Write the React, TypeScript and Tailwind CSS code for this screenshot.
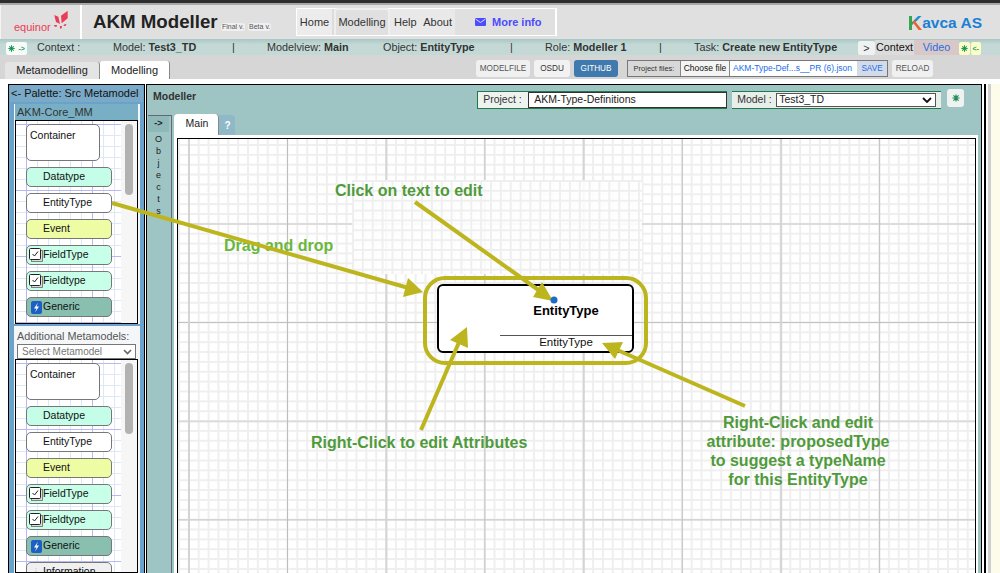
import React from "react";

const gridCls =
  "bg-white bg-[linear-gradient(90deg,#b8b8f4_1.5px,transparent_1.5px),linear-gradient(180deg,#b8b8f4_1.5px,transparent_1.5px),linear-gradient(90deg,#dce8f8_1px,transparent_1px),linear-gradient(180deg,#dce8f8_1px,transparent_1px)] bg-[size:66px_66px,66px_66px,11px_11px,11px_11px] bg-[position:10px_3px,10px_3px,10px_3px,10px_3px]";

const canvasGrid =
  "bg-[linear-gradient(90deg,#bdbdbd_1px,transparent_1px),linear-gradient(90deg,#d4d4d4_2px,transparent_2px),linear-gradient(180deg,#c2c2c2_1px,transparent_1px),linear-gradient(180deg,#dcdcdc_2px,transparent_2px),linear-gradient(90deg,#efefef_1.5px,transparent_1.5px),linear-gradient(180deg,#efefef_1.5px,transparent_1.5px)] bg-[size:197.4px_197.4px,197.4px_197.4px,197.4px_197.4px,197.4px_197.4px,9.87px_9.87px,9.87px_9.87px] bg-[position:109px_0px,10px_0px,0px_183px,0px_84px,0px_5px,0px_5px]";

function CheckIcon() {
  return (
    <svg width="14" height="14" viewBox="0 0 14 14" className="shrink-0">
      <rect x="2.5" y="2.5" width="11" height="11" fill="#ddd" stroke="#666" strokeWidth="0.8" />
      <rect x="0.5" y="0.5" width="11" height="11" rx="1" fill="#fff" stroke="#222" strokeWidth="1" />
      <path d="M3.5 6 L5.5 8 L9 3.5" fill="none" stroke="#222" strokeWidth="1" />
    </svg>
  );
}

function BoltIcon() {
  return (
    <svg width="11" height="13" viewBox="0 0 11 13" className="shrink-0">
      <rect width="11" height="13" rx="2" fill="#1e5fc4" />
      <path d="M7 1.5 L3 7.5 H5.5 L4 11.5 L8 5.5 H5.5 Z" fill="#fff" />
    </svg>
  );
}

function Item({
  label,
  bg,
  icon,
}: {
  label: string;
  bg: string;
  icon?: React.ReactNode;
}) {
  return (
    <div
      className={
        "w-[86px] h-[20px] shrink-0 rounded-[5px] border-[1.5px] border-[#777] flex items-center text-[10.5px] text-[#111] " +
        bg
      }
    >
      <span className="w-[16px] shrink-0 flex justify-center pl-[2px]">{icon}</span>
      <span className="whitespace-nowrap">{label}</span>
    </div>
  );
}

function PaletteList({ info }: { info?: boolean }) {
  return (
    <div className="relative flex-1 min-h-0 overflow-hidden border border-black flex">
      <div className={"flex-1 min-w-0 pl-[10px] pt-[3px] flex flex-col gap-[6px] overflow-hidden " + gridCls}>
        <div className="w-[74px] h-[37px] shrink-0 rounded-[5px] border-[1.5px] border-[#777] bg-white text-[10.5px] text-[#111] pl-[3px] pt-[3px]">
          Container
        </div>
        <Item label="Datatype" bg="bg-[#c4fde8]" />
        <Item label="EntityType" bg="bg-white" />
        <Item label="Event" bg="bg-[#eefca4]" />
        <Item label="FieldType" bg="bg-[#c8ffe9]" icon={<CheckIcon />} />
        <Item label="Fieldtype" bg="bg-[#c8ffe9]" icon={<CheckIcon />} />
        <Item label="Generic" bg="bg-[#88bfae]" icon={<BoltIcon />} />
        <Item
          label={info ? "Information" : ""}
          bg="bg-[#f0f0f0]"
          icon={info ? <span className="text-[#ccc] text-[11px] leading-none">i</span> : undefined}
        />
      </div>
      <div className="w-[16px] shrink-0 bg-[#f6f6f6] pt-[3px] flex justify-center">
        <div className="w-[8px] h-[71px] rounded-full bg-[#b2b2b2]" />
      </div>
    </div>
  );
}

function TinyAsterisk({ color = "#1c9a58", size = 7 }: { color?: string; size?: number }) {
  return (
    <svg width={size} height={size} viewBox="0 0 10 10" className="shrink-0">
      <path d="M5 0.5 V9.5 M0.5 5 H9.5 M1.8 1.8 L8.2 8.2 M8.2 1.8 L1.8 8.2" stroke={color} strokeWidth="1.5" />
    </svg>
  );
}

function TinyBtn({ bg, children }: { bg: string; children: React.ReactNode }) {
  return (
    <span className={"w-[10.5px] h-[13px] flex items-center justify-center rounded-[2px] text-[7px] leading-none text-[#1c9a58] font-bold " + bg}>
      {children}
    </span>
  );
}

export default function App() {
  return (
    <div className="relative w-[1000px] h-[573px] overflow-hidden flex flex-col bg-white font-['Liberation_Sans',Arial,sans-serif] text-[#222]">
      {/* window edge */}
      <div className="h-[3px] shrink-0 bg-[#2e2e2e]" />
      <div className="h-[2px] shrink-0 bg-[#a8a8a8]" />

      {/* header */}
      <div className="h-[34px] shrink-0 bg-[#e0e0e0] flex items-stretch border-l border-[#f4f4f4]">
        <div className="w-[81px] shrink-0 flex items-start pl-[13px] border-r-2 border-white">
          <span className="text-[11px] leading-[12px] text-[#eb3b55] mt-[16px] w-[39px] shrink-0">equinor</span>
          <svg width="16" height="20" viewBox="0 0 16 20" className="mt-[5px] shrink-0">
            <path d="M1.3 5 L5.3 6.7 L7 14 L3 12 Z" fill="#eb3b55" />
            <path d="M14.7 0.7 L14.7 8.3 L8.7 13.3 L8 5.7 Z" fill="#eb3b55" />
            <path d="M1 15 L4 15 L3.5 17 L1.5 16.5 Z M6.8 16 L9 16 L8.5 18.5 L7 18.5 Z M11 14.5 L13.5 14 L12.5 16 L10.5 16 Z" fill="#eb3b55" />
          </svg>
        </div>
        <div className="w-[214px] shrink-0 flex items-center pl-[11px]">
          <span className="w-[122px] shrink-0 text-[18.7px] font-bold text-[#222] whitespace-nowrap">AKM Modeller</span>
          <span className="ml-[6px] mt-[9px] rounded-[3px] bg-[#f0f0f0] px-[1px] text-[7px] leading-[8px] text-[#555] whitespace-nowrap">Final v.</span>
          <span className="ml-[3px] mt-[9px] rounded-[3px] bg-[#f0f0f0] px-[1px] text-[7px] leading-[8px] text-[#555] whitespace-nowrap">Beta v.</span>
        </div>
        <div className="mt-[3px] mb-[3px] w-[261px] shrink-0 flex text-[11px] text-[#333] border-r-2 border-t border-b border-l border-white">
          <span className="w-[37px] bg-[#ececec] flex items-center justify-center border-r-2 border-[#dcdcdc]">Home</span>
          <span className="w-[56px] bg-[#e0e0e0] rounded-t-[4px] flex items-center justify-center border-t-2 border-x-2 border-[#eeeeee] -mt-[1px]">Modelling</span>
          <span className="w-[65px] bg-[#e9e9e9] flex items-center justify-between pl-[4px] pr-[3px]">
            <span>Help</span>
            <span>About</span>
          </span>
          <span className="flex-1 flex items-center pl-[20px] gap-[6px] font-bold text-[#4b4bff]">
            <svg width="11" height="8" viewBox="0 0 11 8">
              <rect width="11" height="8" rx="1" fill="#4b4bff" />
              <path d="M0.5 1 L5.5 4.5 L10.5 1" fill="none" stroke="#dfdfff" strokeWidth="1" />
            </svg>
            More info
          </span>
        </div>
        <div className="flex-1 flex items-center justify-end pr-[18px] pt-[2px]">
          <span className="text-[20px] font-bold leading-none text-transparent bg-clip-text bg-[linear-gradient(90deg,#2fa84f_36%,transparent_36%),linear-gradient(180deg,#1c8fd0_42%,#e8642c_42%)]">K</span>
          <span className="text-[15.5px] font-bold leading-none text-[#1b7fd6]">avca AS</span>
        </div>
      </div>

      {/* context bar */}
      <div className="h-[16px] shrink-0 bg-[linear-gradient(180deg,#a9c6c4_0%,#c4d9d6_35%,#c4d9d6_100%)] flex items-end text-[10.8px] text-[#333] whitespace-nowrap">
        <span className="w-[6px] shrink-0" />
        <span className="w-[31px] shrink-0 flex h-[13px]">
          <span className="w-[10.5px] bg-[#f6fbf8] rounded-l-[2px] flex items-center justify-center"><TinyAsterisk /></span>
          <span className="w-[10.5px] bg-[#f6fbf8] rounded-r-[2px] flex items-center justify-center text-[7px] text-[#1c9a58] font-bold leading-none">-&gt;</span>
        </span>
        <span className="w-[76px] shrink-0 self-center">Context :</span>
        <span className="w-[119px] shrink-0 self-center">Model: <b>Test3_TD</b></span>
        <span className="w-[35px] shrink-0 self-center">|</span>
        <span className="w-[116px] shrink-0 self-center">Modelview: <b>Main</b></span>
        <span className="w-[127px] shrink-0 self-center">Object: <b>EntityType</b></span>
        <span className="w-[35px] shrink-0 self-center">|</span>
        <span className="w-[114px] shrink-0 self-center">Role: <b>Modeller 1</b></span>
        <span className="w-[35px] shrink-0 self-center">|</span>
        <span className="w-[164px] shrink-0 self-center">Task: <b>Create new EntityType</b></span>
        <span className="w-[17px] h-[14px] shrink-0 bg-[#eef2f2] rounded-[2px] flex items-center justify-center">&gt;</span>
        <span className="w-[39px] h-[15px] shrink-0 bg-[#dcdcdc] text-[#111] flex items-center justify-center">Context</span>
        <span className="w-[45px] h-[15px] shrink-0 bg-[#d9c8c8] text-[#2a6fe0] flex items-center justify-center">Video</span>
        <span className="shrink-0 flex h-[13px] gap-px">
          <TinyBtn bg="bg-[#fbfdc8]"><TinyAsterisk /></TinyBtn>
          <TinyBtn bg="bg-[#fbfdc8]">&lt;-</TinyBtn>
        </span>
      </div>

      {/* tabs row */}
      <div className="h-[24px] shrink-0 bg-[#d6d6d6] flex items-end relative">
        <div className="w-[5px]" />
        <div className="w-[95px] h-[17px] bg-[#e4e4e4] border-r border-[#888] rounded-t-[3px] text-[11px] flex items-center justify-center text-[#222]">Metamodelling</div>
        <div className="w-[70px] h-[18px] bg-white border-r border-[#888] rounded-t-[3px] text-[11px] flex items-center justify-center text-[#222]">Modelling</div>
        <div className="w-[306px]" />
        <div className="self-start mt-[5px] flex items-stretch h-[17px] text-[8.2px]">
          <span className="w-[54px] bg-[#f0f0f0] rounded-[3px] flex items-center justify-center text-[#555] pt-[1px]">MODELFILE</span>
          <span className="w-[36px] ml-[4px] bg-[#f2f2f2] rounded-[3px] flex items-center justify-center text-[#333] pt-[1px]">OSDU</span>
          <span className="w-[44px] ml-[4px] bg-[#3f79ad] rounded-[3px] flex items-center justify-center text-white pt-[1px]">GITHUB</span>
          <span className="w-[261px] ml-[9px] border border-[#777] flex items-stretch">
            <span className="w-[52px] bg-[#d8d8d8] flex items-center justify-center text-[#333] text-[7.5px]">Project files:</span>
            <span className="w-[50px] bg-[#f4f4f4] border-x border-[#888] flex items-center justify-center text-[#111] text-[8.5px]">Choose file</span>
            <span className="w-[127px] bg-white flex items-center pl-[3px] text-[#1a6ee8] text-[8.5px] whitespace-nowrap">AKM-Type-Def...s__PR (6).json</span>
            <span className="flex-1 bg-[#d3dbe8] flex items-center justify-center text-[#1a6ee8] pt-[1px]">SAVE</span>
          </span>
          <span className="w-[41px] ml-[4px] bg-[#f0f0f0] rounded-[3px] flex items-center justify-center text-[#555] pt-[1px]">RELOAD</span>
        </div>
      </div>

      {/* main */}
      <div className="flex-1 min-h-0 flex items-stretch pt-[5px] pl-[8px] bg-white">
        {/* palette */}
        <div className="w-[137px] shrink-0 border-t border-x border-black bg-[#6ba2cc] flex flex-col overflow-hidden">
          <div className="h-[17px] mb-[2px] shrink-0 bg-[#7aaac8] mx-[1px] pl-[1px] text-[11px] text-[#111] flex items-center whitespace-nowrap">&lt;- Palette: Src Metamodel</div>
          <div className="flex-1 min-h-0 ml-[5px] mr-[4px] pl-[1px] pr-[2px] flex flex-col bg-[#f4f6f8]">
            <div className="h-[16px] shrink-0 bg-[#78afc4] text-[11px] text-[#333] flex items-center pl-[2px]">AKM-Core_MM</div>
            <div className="h-[204px] shrink-0 flex"><PaletteList /></div>
            <div className="h-[2px] shrink-0 bg-[#6ba2cc] -ml-[1px] -mr-[2px]" />
            <div className="h-[18px] shrink-0 pt-[3px] text-[10.8px] text-[#555] flex items-center pl-[2px] whitespace-nowrap">Additional Metamodels:</div>
            <div className="h-[15px] shrink-0 mx-[2px] border border-[#777] bg-white text-[10px] text-[#777] flex items-center justify-between pl-[4px] pr-[3px]">
              <span>Select Metamodel</span>
              <svg width="9" height="6" viewBox="0 0 9 6"><path d="M1 1 L4.5 4.5 L8 1" fill="none" stroke="#666" strokeWidth="1.6" /></svg>
            </div>
            <div className="flex-1 min-h-0 flex"><PaletteList info /></div>
          </div>
        </div>

        <div className="w-[1px] shrink-0" />

        {/* modeller */}
        <div className="w-[836px] shrink-0 border-t border-x border-black bg-[#9fc4c4] flex flex-col overflow-hidden">
          <div className="h-[30px] shrink-0 relative flex">
            <span className="ml-[6px] mt-[4px] text-[10.5px] font-bold text-[#333]">Modeller</span>
            <div className="ml-[281px] mt-[6px] h-[18px] w-[250px] flex bg-[#9fc4c4] border-y border-[#1f7a4a] border-l text-[10.5px]">
              <span className="w-[50px] flex items-center pl-[5px] text-[#333] bg-[#eef3f0]">Project :</span>
              <span className="flex-1 bg-white border border-[#333] flex items-center pl-[5px] text-[#222]">AKM-Type-Definitions</span>
            </div>
            <div className="ml-[5px] mt-[6px] h-[18px] w-[209px] flex items-center border-y border-[#1f7a4a] bg-[#e8eeea] text-[10.5px]">
              <span className="w-[44px] pl-[5px] text-[#333] whitespace-nowrap">Model :</span>
              <span className="w-[160px] h-[14px] border border-[#555] bg-white flex items-center justify-between pl-[2px] pr-[3px] text-[#222]">
                Test3_TD
                <svg width="10" height="6" viewBox="0 0 10 6"><path d="M1 1 L5 5 L9 1" fill="none" stroke="#111" strokeWidth="1.8" /></svg>
              </span>
            </div>
            <span className="ml-[6px] mt-[4px] w-[17px] h-[18px] rounded-[3px] bg-[#eef3f0] flex items-center justify-center">
              <TinyAsterisk color="#1f8a58" size={8} />
            </span>
          </div>

          <div className="flex-1 min-h-0 flex pl-[1px]">
            {/* objects column */}
            <div className="w-[24px] shrink-0 border-t border-r border-[#667] flex flex-col items-center text-[#222] mr-[2px] pr-[2px]">
              <div className="w-full h-[16px] bg-[#8fb8b8] flex items-center justify-center font-bold text-[9px]">-&gt;</div>
              <div className="flex flex-col items-center leading-[12px] mt-[1px] text-[9px]">
                {["O", "b", "j", "e", "c", "t", "s"].map((c, i) => (
                  <span key={i}>{c}</span>
                ))}
              </div>
            </div>

            {/* tabs and canvas */}
            <div className="flex-1 min-w-0 mr-[3px] flex flex-col">
              <div className="h-[21px] shrink-0 flex items-end -mt-px">
                <span className="w-[45px] h-[21px] bg-white rounded-t-[4px] flex items-center justify-center pl-[2px] pb-[2px] text-[10.5px] text-[#222] border-r border-[#888]">Main</span>
                <span className="w-[16px] h-[20px] bg-[#8fb8c8] rounded-tr-[4px] flex items-center justify-center pl-[1px] text-[10px] font-bold text-white">?</span>
              </div>
              <div className="flex-1 min-h-0 bg-white pt-[3px] pl-[3px] flex">
                <div className={"relative w-[799px] border-t border-x border-black bg-white overflow-hidden " + canvasGrid}>
                  {/* pale overlay pane */}
                  <div className="absolute left-[174px] top-[41px] w-[290px] h-[94px] bg-white/85 bg-[linear-gradient(90deg,#efefef_1.5px,transparent_1.5px),linear-gradient(180deg,#efefef_1.5px,transparent_1.5px)] bg-[size:9.87px_9.87px]" />
                  {/* node */}
                  <div className="absolute left-[259px] top-[145px] w-[197px] h-[69px] rounded-[6px] border-2 border-black bg-white">
                    <div className="absolute left-[61px] right-0 top-[49px] h-px bg-[#555]" />
                    <div className="absolute left-[61px] right-0 top-[17px] text-center text-[13px] font-bold leading-[16px] text-black">EntityType</div>
                    <div className="absolute left-[61px] right-0 top-[50px] text-center text-[11.5px] leading-[13px] text-[#111]">EntityType</div>
                  </div>
                  {/* notes */}
                  <div className="absolute left-[157px] top-[43px] text-[16px] font-bold leading-[18px] text-[#4f9a3a] whitespace-nowrap">Click on text to edit</div>
                  <div className="absolute left-[46px] top-[98px] text-[16px] font-bold leading-[18px] text-[#6ab73e] whitespace-nowrap">Drag and drop</div>
                  <div className="absolute left-[133px] top-[295px] text-[16px] font-bold leading-[18px] text-[#4f9a3a] whitespace-nowrap">Right-Click to edit Attributes</div>
                  <div className="absolute left-[520px] top-[274px] w-[200px] text-center text-[16px] font-bold leading-[19px] text-[#4f9a3a]">
                    Right-Click and edit
                    <br />
                    attribute: proposedType
                    <br />
                    to suggest a typeName
                    <br />
                    for this EntityType
                  </div>
                </div>
              </div>
            </div>
          </div>
        </div>

        {/* right edge of the page */}
        <div className="flex-1 flex">
          <div className="w-[2px] bg-white" />
          <div className="w-[2px] bg-black" />
          <div className="w-[2px] bg-white" />
          <div className="w-[3px] bg-[#cfcfcf]" />
          <div className="flex-1 bg-[#fdfbea]" />
        </div>
      </div>

      {/* callouts that lie across the panels */}
      <svg width="1000" height="573" viewBox="0 0 1000 573" className="absolute left-0 top-0 pointer-events-none">
        <g stroke="#bdb51e" fill="none">
          <rect x="425" y="278" width="221" height="85" rx="20" strokeWidth="4" />
          <path d="M112 203 L412 289" strokeWidth="4" />
          <path d="M415 202 L544 294" strokeWidth="4" />
          <path d="M421 430 L460 340" strokeWidth="4" />
          <path d="M745 406 L615 349" strokeWidth="4" />
        </g>
        <g fill="#bdb51e">
          <path d="M423 292 L408 278 L403 297 Z" />
          <path d="M553 301 L542 282 L533 297 Z" />
          <path d="M467 327 L450 340 L468 348 Z" />
          <path d="M602 343 L623 342 L615 359 Z" />
        </g>
        <circle cx="554" cy="300" r="3.5" fill="#1e6cc8" />
      </svg>
    </div>
  );
}
